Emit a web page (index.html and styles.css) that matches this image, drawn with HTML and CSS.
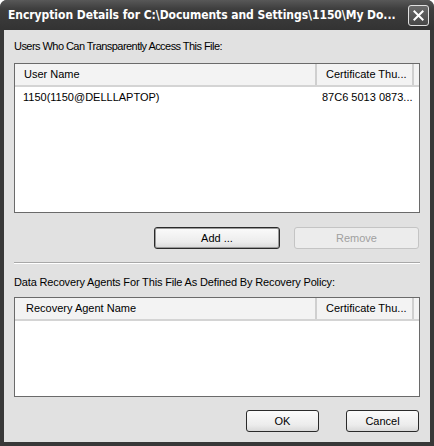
FILE: index.html
```html
<!DOCTYPE html>
<html>
<head>
<meta charset="utf-8">
<link rel="stylesheet" href="styles.css">
</head>
<body>
<div class="window">
  <div class="titlebar">
    <span class="title">Encryption Details for C:\Documents and Settings\1150\My Do...</span>
    <span class="close"><svg width="21" height="21" viewBox="0 0 21 21"><path d="M6 6 L15 15 M15 6 L6 15" stroke="#fff" stroke-width="2.2" stroke-linecap="square"/></svg></span>
  </div>
  <div class="body">
    <div class="label label1">Users Who Can Transparently Access This File:</div>
    <div class="list list1">
      <div class="lhead">
        <div class="col c1">User Name</div>
        <div class="col c2">Certificate Thu...</div>
      </div>
      <div class="row">
        <div class="cell c1">1150(1150@DELLLAPTOP)</div>
        <div class="cell c2">87C6 5013 0873...</div>
      </div>
    </div>
    <div class="btnrow top">
      <button class="btn add">Add ...</button>
      <button class="btn remove" disabled>Remove</button>
    </div>
    <div class="sep"></div>
    <div class="label label2">Data Recovery Agents For This File As Defined By Recovery Policy:</div>
    <div class="list list2">
      <div class="lhead">
        <div class="col c1 c1b">Recovery Agent Name</div>
        <div class="col c2">Certificate Thu...</div>
      </div>
    </div>
    <div class="btnrow bottom">
      <button class="btn ok">OK</button>
      <button class="btn cancel">Cancel</button>
    </div>
  </div>
</div>
</body>
</html>
```
FILE: styles.css
```css
html, body { margin: 0; padding: 0; background: #fff; }
body { width: 434px; height: 446px; overflow: hidden; font-family: "Liberation Sans", Arial, sans-serif; }
.window {
  width: 434px; height: 446px; box-sizing: border-box;
  background: #383838;
  border-radius: 7px 7px 0 0;
  display: flex; flex-direction: column;
  padding: 0 4px 4px 4px;
}
.titlebar {
  height: 30px; display: flex; align-items: center; justify-content: space-between;
  background: linear-gradient(#585858 0%, #3e3e3e 30%, #333 100%);
  margin: 0 -4px; padding: 0 5px 0 8px;
  border-radius: 7px 7px 0 0;
}
.title {
  color: #fff; font-weight: bold; font-size: 12px; letter-spacing: -0.05px; white-space: nowrap;
  font-family: "DejaVu Sans Condensed", "DejaVu Sans", sans-serif;
}
.close {
  width: 21px; height: 21px; box-sizing: border-box; border: 1px solid #e0e0e0; border-radius: 3px;
  display: flex; align-items: center; justify-content: center;
  background: linear-gradient(#6a6a6a, #474747);
}
.close svg { width: 19px; height: 19px; }
.body {
  flex: 1; background: #e1e1e1; padding: 8px 10px 0 10px;
  font-size: 11px; color: #000;
}
.label { height: 17px; line-height: 17px; white-space: nowrap; }
.label1 { letter-spacing: -0.55px; }
.label2 { letter-spacing: -0.15px; margin-top: 10px; margin-bottom: 6px; }
.list { background: #fff; border: 1px solid #6a6a6a; }
.list1 { height: 150px; margin-top: 8px; box-sizing: border-box; }
.list2 { height: 100px; box-sizing: border-box; }
.lhead {
  display: flex; height: 23px; background: #f3f3f3;
  border-bottom: 2px solid #d4d4d4; box-sizing: border-box;
}
.col { line-height: 21px; }
.col.c1 { width: 302px; padding-left: 9px; border-right: 2px solid #cfcfcf; box-sizing: border-box; }
.col.c1b { padding-left: 11px; }
.col.c2 { padding-left: 9px; width: 97px; border-right: 2px solid #cfcfcf; box-sizing: border-box; }
.row { display: flex; height: 18px; line-height: 18px; margin-top: 1px; }
.cell.c1 { width: 302px; padding-left: 8px; box-sizing: border-box; }
.cell.c2 { padding-left: 5px; }
.btnrow { display: flex; justify-content: flex-end; gap: 14px; margin-right: 1px; }
.btnrow.top { margin-top: 14px; }
.btn {
  font-family: inherit; font-size: 11px; height: 22px; border-radius: 3px;
  border: 1px solid #2a2a2a; background: linear-gradient(#fbfbfb, #ececec 70%, #d9d9d9);
  color: #000; padding: 0;
}
.add { width: 126px; box-shadow: inset 0 0 0 1px #9a9a9a; }
.remove { width: 125px; border-color: #c4c4c4; background: #ececec; color: #a0a0a0; }
.sep { height: 1px; background: #a8a8a8; border-bottom: 1px solid #fff; margin-top: 13px; }
.bottom { margin-top: 13px; gap: 27px; }
.ok, .cancel { width: 73px; }
```
